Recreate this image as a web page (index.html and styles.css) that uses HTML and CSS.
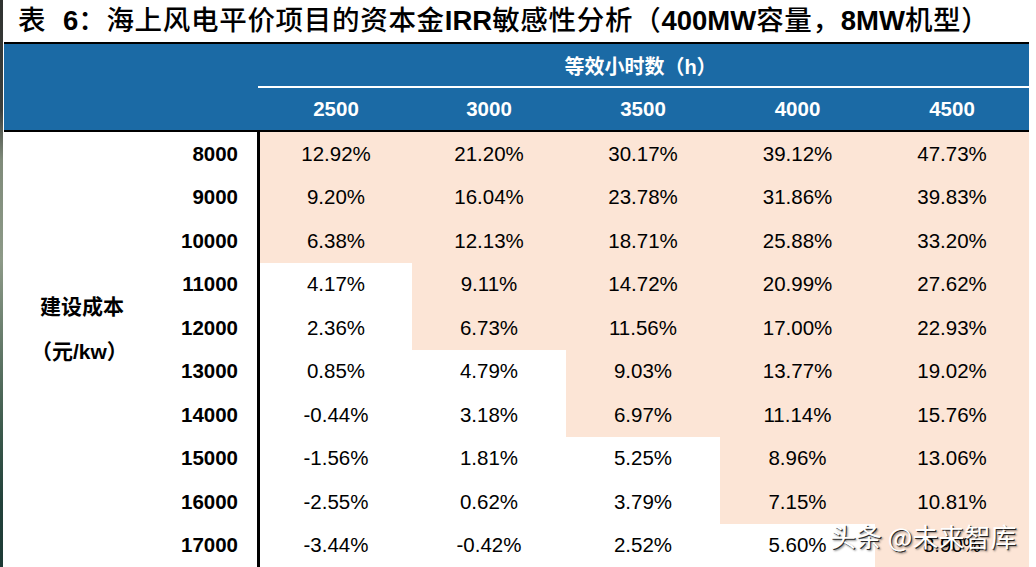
FILE: index.html
```html
<!DOCTYPE html>
<html lang="zh-CN">
<head>
<meta charset="utf-8">
<title>表6 海上风电平价项目的资本金IRR敏感性分析</title>
<link rel="stylesheet" href="styles.css">
</head>
<body>
<div class="page">
  <div class="edge"></div>
  <div class="main">
    <h1 class="title">表&nbsp;&nbsp;<b class="lat">6</b>：海上风电平价项目的资本金<b class="lat">IRR</b>敏感性分析（<b class="lat">400MW</b>容量，<b class="lat">8MW</b>机型）</h1>
    <div class="table">
      <div class="thead">
        <div class="th-blank"></div>
        <div class="th-group">等效小时数（h）</div>
        <div class="th-num">2500</div>
        <div class="th-num">3000</div>
        <div class="th-num">3500</div>
        <div class="th-num">4000</div>
        <div class="th-num">4500</div>
      </div>
      <div class="tbody">
        <div class="group-label"><div>建设成本</div><div class="unit">（元/kw）</div></div>

        <div class="rn">8000</div>
        <div class="c s">12.92%</div><div class="c s">21.20%</div><div class="c s">30.17%</div><div class="c s">39.12%</div><div class="c s">47.73%</div>

        <div class="rn">9000</div>
        <div class="c s">9.20%</div><div class="c s">16.04%</div><div class="c s">23.78%</div><div class="c s">31.86%</div><div class="c s">39.83%</div>

        <div class="rn">10000</div>
        <div class="c s">6.38%</div><div class="c s">12.13%</div><div class="c s">18.71%</div><div class="c s">25.88%</div><div class="c s">33.20%</div>

        <div class="rn">11000</div>
        <div class="c">4.17%</div><div class="c s">9.11%</div><div class="c s">14.72%</div><div class="c s">20.99%</div><div class="c s">27.62%</div>

        <div class="rn">12000</div>
        <div class="c">2.36%</div><div class="c s">6.73%</div><div class="c s">11.56%</div><div class="c s">17.00%</div><div class="c s">22.93%</div>

        <div class="rn">13000</div>
        <div class="c">0.85%</div><div class="c">4.79%</div><div class="c s">9.03%</div><div class="c s">13.77%</div><div class="c s">19.02%</div>

        <div class="rn">14000</div>
        <div class="c">-0.44%</div><div class="c">3.18%</div><div class="c s">6.97%</div><div class="c s">11.14%</div><div class="c s">15.76%</div>

        <div class="rn">15000</div>
        <div class="c">-1.56%</div><div class="c">1.81%</div><div class="c">5.25%</div><div class="c s">8.96%</div><div class="c s">13.06%</div>

        <div class="rn">16000</div>
        <div class="c">-2.55%</div><div class="c">0.62%</div><div class="c">3.79%</div><div class="c s">7.15%</div><div class="c s">10.81%</div>

        <div class="rn">17000</div>
        <div class="c">-3.44%</div><div class="c">-0.42%</div><div class="c">2.52%</div><div class="c">5.60%</div><div class="c s">8.90%</div>
      </div>
    </div>
  </div>
  <div class="watermark">头条 @未来智库</div>
</div>
</body>
</html>
```

FILE: styles.css
```css
* { box-sizing: border-box; }

html, body {
  margin: 0;
  padding: 0;
  background: #ffffff;
}

.page {
  position: relative;
  width: 1036px;
  height: 567px;
  overflow: hidden;
  display: flex;
  background: #ffffff;
}

.edge {
  width: 3px;
  flex: none;
  background: linear-gradient(to bottom,
    #2f3230 0px,
    #3d403d 110px,
    #7f8b7a 160px,
    #8d9a88 260px,
    #5d7464 360px,
    #3c5a4c 430px,
    #23423b 500px,
    #1d3a35 567px);
}

.main {
  width: 1026px;
  margin-left: 1px;
  display: flex;
  flex-direction: column;
}

.title {
  margin: 0;
  height: 42px;
  padding-left: 14px;
  font-family: "Liberation Sans", "Noto Sans CJK SC", sans-serif;
  font-weight: 500;
  font-size: 27.5px;
  letter-spacing: 0.7px;
  line-height: 42px;
  color: #000;
  white-space: nowrap;
}

.title .lat {
  font-weight: 700;
  letter-spacing: 0;
}

.table {
  width: 1025px;
}

.thead {
  display: grid;
  grid-template-columns: 256px 152px 154px 154px 155px 154px;
  grid-template-rows: 44px 42px;
  background: #1b6aa5;
  border-top: 2px solid #000;
  border-bottom: 2px solid #000;
  color: #fff;
}

.th-blank {
  grid-column: 1;
  grid-row: 1 / 3;
}

.th-group {
  grid-column: 2 / 7;
  grid-row: 1;
  margin-left: -2px;
  border-bottom: 2px solid #fff;
  display: flex;
  align-items: center;
  justify-content: center;
  font-family: "Liberation Sans", "Noto Sans CJK SC", sans-serif;
  font-weight: 700;
  font-size: 20px;
  padding-right: 6px;
}

.th-num {
  grid-row: 2;
  display: flex;
  align-items: center;
  justify-content: center;
  font-family: "Liberation Sans", Arial, sans-serif;
  font-weight: 700;
  font-size: 20.5px;
}

.tbody {
  display: grid;
  grid-template-columns: 150px 106px 152px 154px 154px 155px 154px;
  grid-auto-rows: 43.5px;
}

.group-label {
  grid-column: 1;
  grid-row: 1 / 11;
  padding-top: 152px;
  padding-left: 36px;
  font-family: "Liberation Sans", "Noto Sans CJK SC", sans-serif;
  font-weight: 700;
  font-size: 21px;
  line-height: 45px;
  color: #000;
}

.group-label .unit {
  margin-left: -9px;
}

.rn {
  border-right: 3px solid #000;
  display: flex;
  align-items: center;
  justify-content: flex-end;
  padding-right: 19px;
  font-family: "Liberation Sans", Arial, sans-serif;
  font-weight: 700;
  font-size: 20.5px;
  color: #000;
}

.c {
  display: flex;
  align-items: center;
  justify-content: center;
  font-family: "Liberation Sans", Arial, sans-serif;
  font-size: 20.5px;
  color: #000;
  background: #ffffff;
}

.c.s {
  background: #fce5d6;
}

.watermark {
  position: absolute;
  left: 830px;
  top: 520px;
  font-family: "Noto Sans CJK SC", sans-serif;
  font-size: 26px;
  line-height: 32px;
  color: #ffffff;
  white-space: nowrap;
  text-shadow: 1px 1px 0 rgba(0, 0, 0, 0.8), 2px 2px 2px rgba(0, 0, 0, 0.45);
}
```
